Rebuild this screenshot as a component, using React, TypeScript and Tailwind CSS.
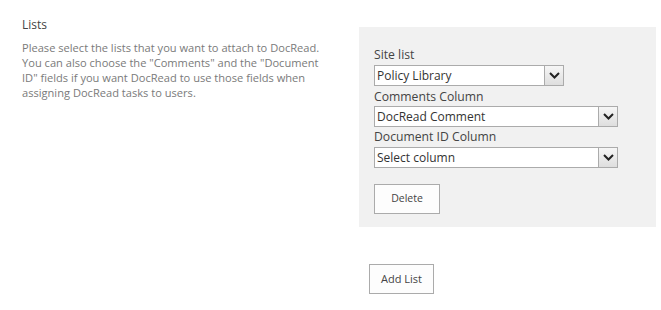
import React from "react";

function Chevron() {
  return (
    <svg width="11" height="7" viewBox="0 0 11 7">
      <path d="M1 1 L5.5 5.5 L10 1" fill="none" stroke="#222" strokeWidth="2" />
    </svg>
  );
}

function Select({ value, width, mt }: { value: string; width: string; mt: string }) {
  return (
    <div className={`flex h-[21px] shrink-0 ${width} ${mt} items-stretch border border-[#ababab] bg-white`}>
      <div className="flex flex-1 items-center pl-[2px] text-[12px] text-[#333]">{value}</div>
      <div className="flex w-[19px] items-center justify-center border-l border-[#ababab] bg-gradient-to-b from-[#f6f6f6] to-[#dedede]">
        <Chevron />
      </div>
    </div>
  );
}

export default function App() {
  return (
    <div className="h-[310px] w-[661px] bg-white font-['Open_Sans',sans-serif]">
      <div className="flex">
        <div className="w-[359px] shrink-0 pl-[22px] pt-[17px]">
          <div className="text-[12px] leading-[16px] text-[#444]">Lists</div>
          <div className="mt-[7px] w-[302px] text-[11.1px] leading-[15px] text-[#7a7a7a]">
            Please select the lists that you want to attach to DocRead. You can also choose the "Comments" and the "Document ID" fields if you want DocRead to use those fields when assigning DocRead tasks to users.
          </div>
        </div>
        <div className="flex flex-col">
          <div className="mt-[27px] flex h-[200px] w-[297px] flex-col bg-[#f1f1f1] pl-[15px] pt-[19px]">
            <div className="h-[18px] shrink-0 text-[12.2px] leading-[18px] text-[#444]">Site list</div>
            <Select value="Policy Library" width="w-[190px]" mt="mt-[1px]" />
            <div className="mt-[2px] h-[18px] shrink-0 text-[12.2px] leading-[18px] text-[#444]">Comments Column</div>
            <Select value="DocRead Comment" width="w-[244px]" mt="mt-0" />
            <div className="mt-[1px] h-[18px] shrink-0 text-[12.2px] leading-[18px] text-[#444]">Document ID Column</div>
            <Select value="Select column" width="w-[244px]" mt="mt-[1px]" />
            <button className="mt-[16px] flex h-[30px] w-[66px] shrink-0 items-center justify-center border border-[#ababab] bg-[#fdfdfd] text-[10.5px] text-[#444]">
              Delete
            </button>
          </div>
          <button className="ml-[10px] mt-[37px] flex h-[30px] w-[65px] items-center justify-center border border-[#ababab] bg-[#fdfdfd] text-[11px] text-[#444]">
            Add List
          </button>
        </div>
      </div>
    </div>
  );
}
